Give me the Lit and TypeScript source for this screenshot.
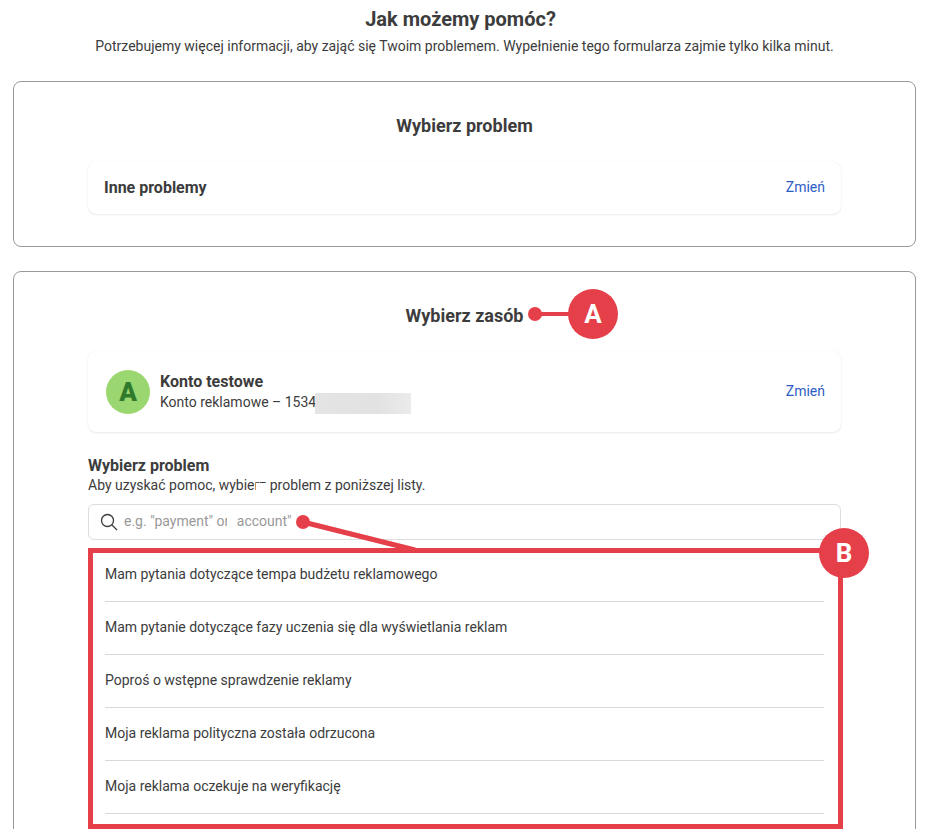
import { LitElement, html, css } from 'lit'
import { customElement } from 'lit/decorators.js'

const PROBLEMS = [
  'Mam pytania dotyczące tempa budżetu reklamowego',
  'Mam pytanie dotyczące fazy uczenia się dla wyświetlania reklam',
  'Poproś o wstępne sprawdzenie reklamy',
  'Moja reklama polityczna została odrzucona',
  'Moja reklama oczekuje na weryfikację',
]

@customElement('app-root')
class AppRoot extends LitElement {
  static styles = css`
    :host {
      display: block;
      position: relative;
      height: 829px;
      overflow: hidden;
      background: #fff;
      color: #3c3c3c;
      font-family: Roboto, 'Liberation Sans', sans-serif;
      font-size: 14px;
    }

    .page {
      padding: 6px 13px 0;
    }

    .heading {
      margin: 0;
      padding-right: 8px;
      font-size: 20px;
      font-weight: 700;
      line-height: 26px;
      text-align: center;
    }

    .intro {
      margin: 4px 0 0;
      line-height: 20px;
      text-align: center;
    }

    .panel {
      border: 1px solid #999;
      border-radius: 8px;
      padding: 32px 74px;
    }

    .panel + .panel {
      margin-top: 24px;
    }

    .panel + .panel .panel-title {
      margin-bottom: 23px;
    }

    .first {
      margin-top: 25px;
    }

    .panel-title {
      margin: 0 0 24px;
      font-size: 18px;
      font-weight: 700;
      line-height: 24px;
      text-align: center;
    }

    .tile {
      display: flex;
      align-items: center;
      justify-content: space-between;
      border-radius: 8px;
      padding: 0 16px;
      box-shadow: 0 1px 2px rgba(0, 0, 0, 0.08), 0 0 1px rgba(0, 0, 0, 0.1);
    }

    .tile.plain {
      height: 52px;
    }

    .tile.account {
      height: 81px;
      padding-left: 18px;
    }

    .strong {
      margin-bottom: 2px;
      font-size: 16px;
      font-weight: 700;
    }

    .change {
      margin-bottom: 2px;
      color: #2c5cc5;
    }

    .who {
      display: flex;
      align-items: center;
      gap: 10px;
    }

    .avatar {
      display: flex;
      align-items: center;
      justify-content: center;
      width: 44px;
      height: 44px;
      border-radius: 50%;
      background: #9bd770;
      color: #2f7a2b;
      font-size: 26px;
      font-weight: 900;
    }

    .who-name {
      font-size: 16px;
      font-weight: 700;
      line-height: 20px;
    }

    .who-id {
      line-height: 20px;
    }

    .pick {
      margin-top: 24px;
    }

    .pick-title {
      font-size: 16px;
      font-weight: 700;
      line-height: 20px;
    }

    .pick-hint {
      line-height: 18px;
    }

    .search {
      display: flex;
      align-items: center;
      gap: 6px;
      height: 36px;
      box-sizing: border-box;
      margin-top: 10px;
      border: 1px solid #ddd;
      border-radius: 6px;
      padding: 0 11px;
      color: #999;
    }

    .search svg {
      flex: none;
    }

    .search span {
      margin-bottom: 2px;
    }

    .list {
      margin: 9px 0 0;
      padding: 0 17px;
      list-style: none;
    }

    .list li {
      height: 52px;
      border-bottom: 1px solid #d8d8d8;
      line-height: 50px;
    }

    /* annotations drawn over the form */
    .marks {
      position: absolute;
      inset: 0;
      pointer-events: none;
    }

    .marks svg {
      position: absolute;
      left: 0;
      top: 0;
    }

    .badge {
      position: absolute;
      display: flex;
      align-items: center;
      justify-content: center;
      width: 50px;
      height: 50px;
      border-radius: 50%;
      background: #e5404a;
      color: #fff;
      font-size: 26px;
      font-weight: 700;
    }

    .badge-a {
      left: 568px;
      top: 289px;
    }

    .badge-b {
      left: 819px;
      top: 528px;
    }

    .outline {
      position: absolute;
      left: 88px;
      top: 548px;
      width: 755px;
      height: 281px;
      box-sizing: border-box;
      border: 5px solid #e5404a;
    }

    .patch {
      position: absolute;
      background: #fff;
    }

    .patch-tile {
      left: 399px;
      top: 345px;
      width: 14px;
      height: 8px;
    }

    .patch-hint {
      left: 256px;
      top: 483px;
      width: 13px;
      height: 9px;
    }

    .patch-search {
      left: 227px;
      top: 512px;
      width: 10px;
      height: 18px;
    }

    .redacted {
      position: absolute;
      left: 315px;
      top: 393px;
      width: 96px;
      height: 21px;
      background: linear-gradient(90deg, #e4e4e4, #e2e2e2 65%, #ebebeb);
    }
  `

  render() {
    return html`
      <div class="page">
        <h1 class="heading">Jak możemy pomóc?</h1>
        <p class="intro">Potrzebujemy więcej informacji, aby zająć się Twoim problemem. Wypełnienie tego formularza zajmie tylko kilka minut.</p>

        <section class="panel first">
          <h2 class="panel-title">Wybierz problem</h2>
          <div class="tile plain">
            <span class="strong">Inne problemy</span>
            <span class="change">Zmień</span>
          </div>
        </section>

        <section class="panel">
          <h2 class="panel-title">Wybierz zasób</h2>
          <div class="tile account">
            <div class="who">
              <div class="avatar">A</div>
              <div>
                <div class="who-name">Konto testowe</div>
                <div class="who-id">Konto reklamowe – 1534</div>
              </div>
            </div>
            <span class="change">Zmień</span>
          </div>

          <div class="pick">
            <div class="pick-title">Wybierz problem</div>
            <div class="pick-hint">Aby uzyskać pomoc, wybierz problem z poniższej listy.</div>
            <div class="search">
              <svg width="18" height="18" viewBox="0 0 18 18" fill="none" stroke="#3c3c3c" stroke-width="1.3">
                <circle cx="7.5" cy="7.5" r="6"></circle>
                <path d="M12 12l5 5"></path>
              </svg>
              <span>e.g. "payment" or "account"</span>
            </div>
            <ul class="list">
              ${PROBLEMS.map((p) => html`<li>${p}</li>`)}
            </ul>
          </div>
        </section>
      </div>

      <div class="marks">
        <div class="redacted"></div>
        <div class="patch patch-tile"></div>
        <div class="patch patch-hint"></div>
        <div class="patch patch-search"></div>
        <svg width="929" height="829">
          <circle cx="535" cy="314" r="7" fill="#e5404a"></circle>
          <path d="M535 314H580" stroke="#e5404a" stroke-width="4"></path>
          <circle cx="303" cy="522" r="7" fill="#e5404a"></circle>
          <path d="M303 522L415 550" stroke="#e5404a" stroke-width="5"></path>
        </svg>
        <div class="outline"></div>
        <div class="badge badge-a">A</div>
        <div class="badge badge-b">B</div>
      </div>
    `
  }
}
